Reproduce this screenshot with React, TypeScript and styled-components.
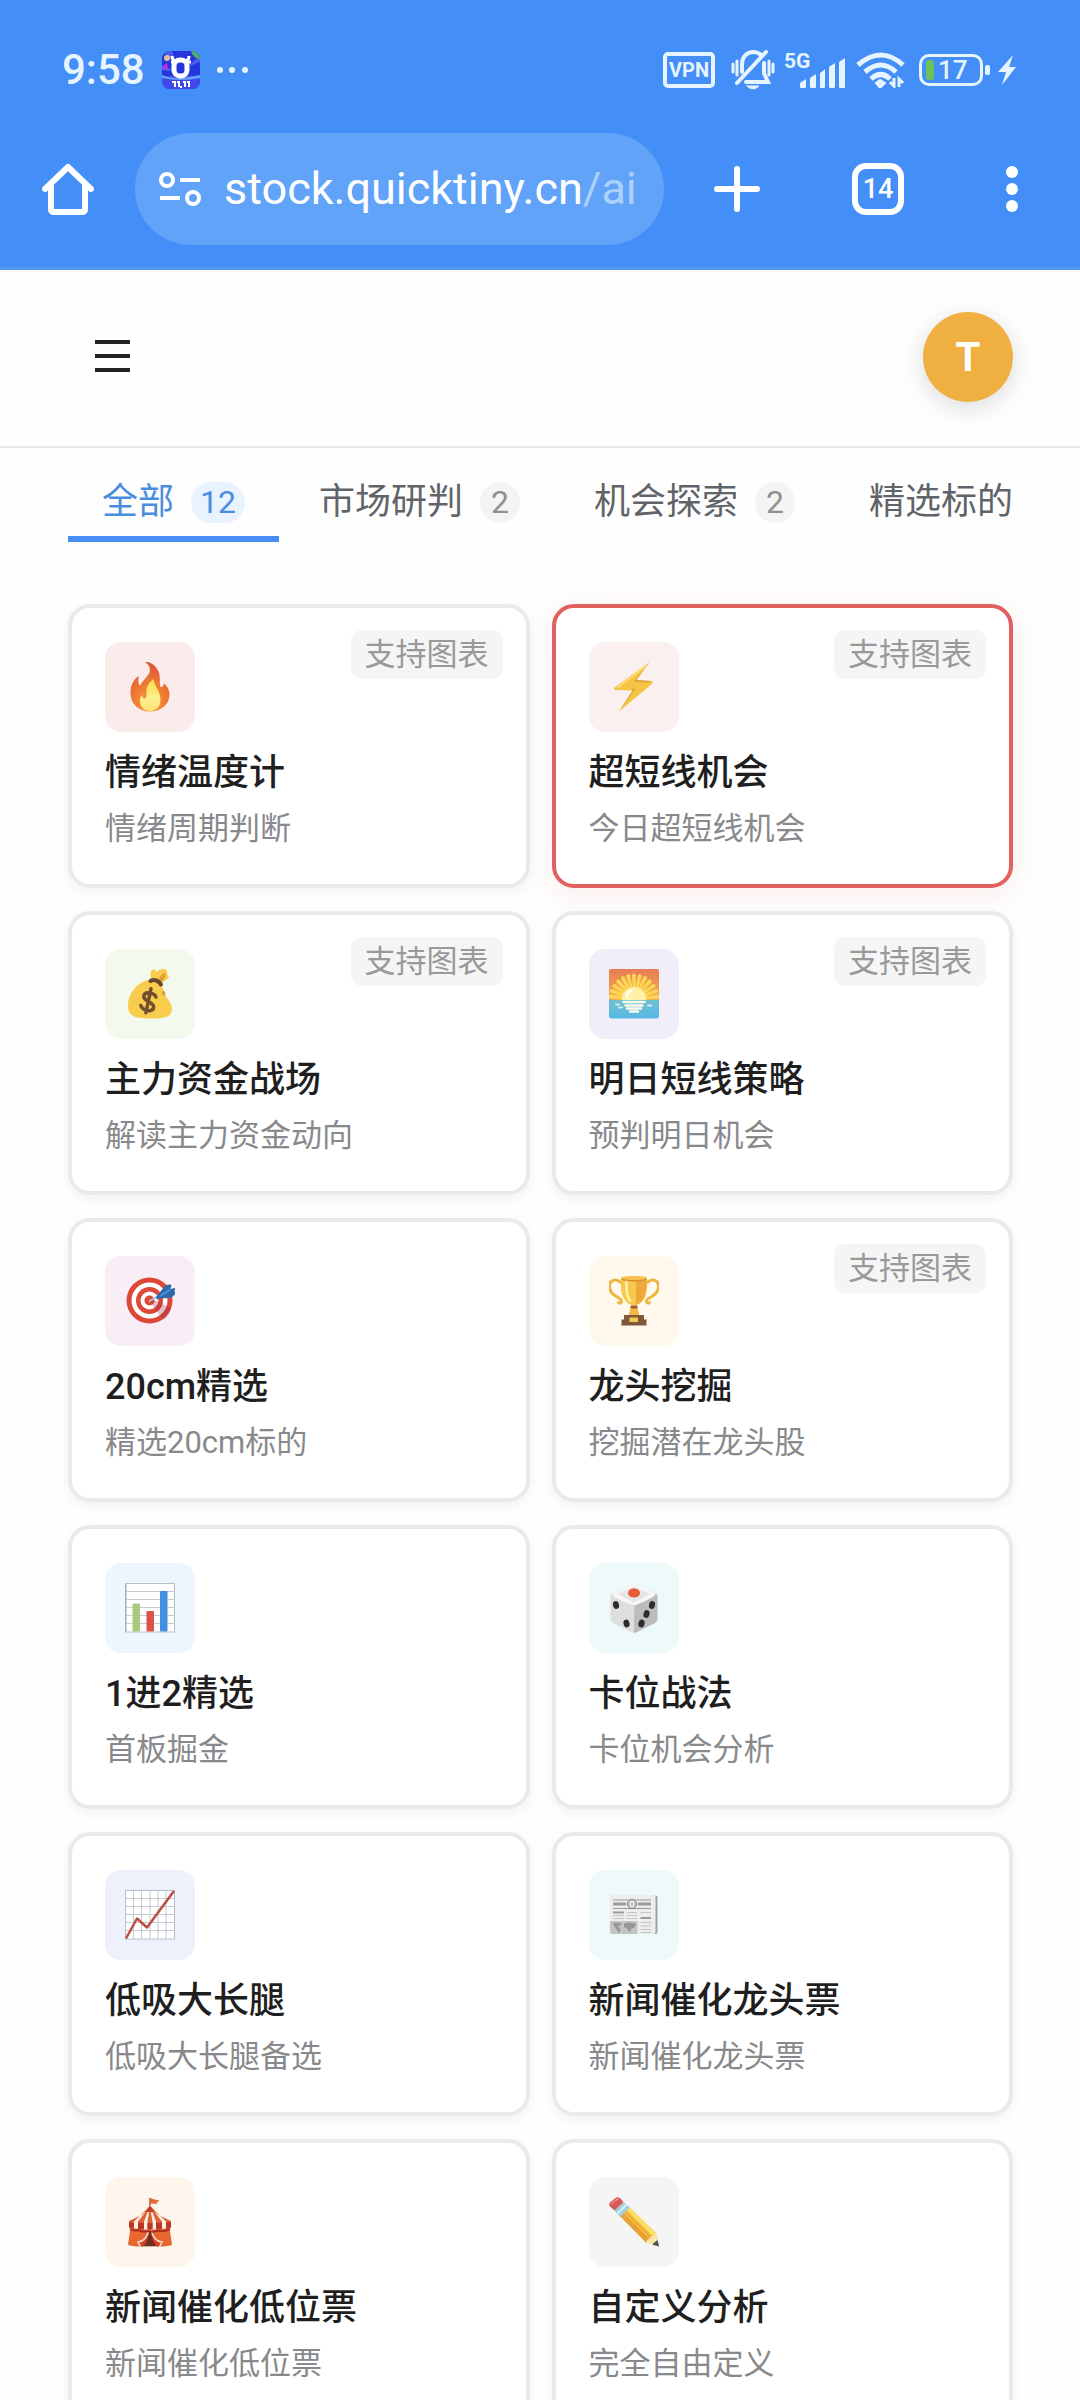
import React, { useState } from 'react';
import styled, { createGlobalStyle } from 'styled-components';

const GlobalStyle = createGlobalStyle`
  * { box-sizing: border-box; }
  body {
    margin: 0;
    background: #fefefe;
    font-family: Roboto, "Noto Sans CJK SC", sans-serif;
  }
  button {
    margin: 0;
    padding: 0;
    border: 0;
    background: none;
    color: inherit;
    font: inherit;
    cursor: pointer;
  }
  svg { display: block; flex: none; }
`;

const Screen = styled.div`
  display: flex;
  flex-direction: column;
  height: 100vh;
  overflow: hidden;
`;

/* ---------- browser chrome ---------- */

const BrowserChrome = styled.div`
  flex: none;
  padding: 48px 0 22px;
  background: #448ef8;
  border-bottom: 3px solid #5298f2;
  color: #fff;
`;

const StatusBar = styled.div`
  display: flex;
  align-items: center;
  justify-content: space-between;
  height: 44px;
  padding: 0 64px 0 62px;
  color: #e6f4ff;
`;

const StatusLeft = styled.div`
  display: flex;
  align-items: center;
  gap: 17px;
`;

const StatusRight = styled.div`
  display: flex;
  align-items: center;
  gap: 8px;
`;

const Clock = styled.time`
  font-size: 42px;
  line-height: 44px;
  font-weight: 500;
`;

const VpnTag = styled.span`
  display: flex;
  align-items: center;
  justify-content: center;
  width: 52px;
  height: 36px;
  border: 4px solid currentColor;
  border-radius: 5px;
  font-size: 20px;
  line-height: 20px;
  font-weight: 700;
`;

const Signal = styled.span`
  display: flex;
  position: relative;
  width: 61px;
  height: 38px;
  justify-content: flex-end;
  align-items: flex-end;
`;

const NetworkType = styled.span`
  position: absolute;
  left: 0;
  top: 0;
  font-size: 21px;
  line-height: 20px;
  font-weight: 700;
`;

const Battery = styled.span`
  display: flex;
  align-items: center;
  gap: 2px;
`;

const BatteryBody = styled.span`
  display: flex;
  align-items: center;
  width: 64px;
  height: 32px;
  padding: 0 4px;
  border: 3px solid currentColor;
  border-radius: 10px;
`;

const BatteryLevel = styled.span`
  width: 8px;
  height: 20px;
  border-radius: 3px;
  background: #6cc25a;
`;

const BatteryText = styled.span`
  flex: 1;
  padding-left: 4px;
  font-size: 26px;
  line-height: 26px;
  font-weight: 500;
`;

const BatteryTip = styled.span`
  width: 5px;
  height: 10px;
  border-radius: 2px;
  background: currentColor;
`;

const Toolbar = styled.div`
  display: flex;
  align-items: center;
  margin-top: 41px;
  padding: 0 52px 0 42px;
`;

const AddressBar = styled.button`
  display: flex;
  flex: 1;
  align-items: center;
  gap: 22px;
  min-width: 0;
  height: 112px;
  margin: 0 50px 0 41px;
  padding: 0 24px;
  border-radius: 56px;
  background: #60a3f8;
  overflow: hidden;
`;

const Address = styled.span`
  font-size: 45px;
  line-height: 60px;
  white-space: nowrap;
`;

const AddressPath = styled.span`
  color: #acd1fd;
`;

const ToolbarActions = styled.div`
  display: flex;
  align-items: center;
  gap: 92px;
`;

const TabSwitcher = styled.button`
  && {
    width: 52px;
    height: 52px;
    border: 6px solid #fff;
    border-radius: 14px;
    font-size: 27px;
    line-height: 40px;
    font-weight: 500;
    text-align: center;
  }
`;

/* ---------- page ---------- */

const SiteHeader = styled.header`
  display: flex;
  flex: none;
  align-items: center;
  justify-content: space-between;
  height: 178px;
  padding: 0 67px 2px 92px;
  border-bottom: 2px solid #e8e8ec;
`;

const Avatar = styled.button`
  && {
    width: 90px;
    height: 90px;
    border-radius: 50%;
    background: #efaf41;
    box-shadow: 0 6px 24px rgba(0, 0, 0, 0.14);
    color: #fff;
    font-size: 40px;
    font-weight: 700;
  }
`;

const Content = styled.main`
  flex: 1;
  min-height: 0;
  padding: 20px 67px 24px 68px;
  overflow-y: auto;
  scrollbar-width: none;
`;

const TabList = styled.div`
  display: flex;
  gap: 6px;
  margin-bottom: 62px;
  overflow-x: auto;
  scrollbar-width: none;
`;

const Tab = styled.button<{ $active: boolean }>`
  && {
    display: flex;
    flex: none;
    align-items: center;
    gap: 17px;
    height: 74px;
    padding: 0 34px;
    border-bottom: 6px solid ${(p) => (p.$active ? '#478ef2' : 'transparent')};
    color: ${(p) => (p.$active ? '#4a8de0' : '#606468')};
    font-size: 36px;
    line-height: 54px;
    white-space: nowrap;
  }
`;

const Count = styled.span<{ $active: boolean }>`
  min-width: 40px;
  padding: 0 9px;
  border-radius: 21px;
  background: ${(p) => (p.$active ? '#e8f3ff' : '#f4f4f4')};
  color: ${(p) => (p.$active ? '#4a8de0' : '#909090')};
  font-size: 32px;
  line-height: 41px;
  text-align: center;
`;

const CardGrid = styled.div`
  display: grid;
  grid-template-columns: repeat(2, minmax(0, 1fr));
  gap: 23px 22px;
`;

const Card = styled.button<{ $hot?: boolean }>`
  && {
    display: flex;
    position: relative;
    flex-direction: column;
    align-items: flex-start;
    padding: 34px 33px 32px;
    border: 4px solid ${(p) => (p.$hot ? '#e06160' : '#e8eaee')};
    border-radius: 22px;
    background: #fff;
    box-shadow: ${(p) =>
      p.$hot ? '0 6px 30px rgba(224, 97, 96, 0.12)' : '0 4px 12px rgba(0, 0, 0, 0.05)'};
    text-align: left;
  }
`;

const IconTile = styled.span<{ $tint: string }>`
  display: flex;
  align-items: center;
  justify-content: center;
  width: 90px;
  height: 90px;
  border-radius: 16px;
  background: ${(p) => p.$tint};
`;

const CardTitle = styled.span`
  margin-top: 14px;
  color: #1f1f1f;
  font-size: 36px;
  line-height: 54px;
  font-weight: 500;
`;

const CardNote = styled.span`
  margin-top: 6px;
  color: #88898c;
  font-size: 31px;
  line-height: 46px;
`;

const ChartBadge = styled.span`
  position: absolute;
  top: 22px;
  right: 23px;
  padding: 0 14px;
  border-radius: 11px;
  background: #f5f5f5;
  color: #999;
  font-size: 31px;
  line-height: 49px;
`;

/* ---------- emoji drawings, 100 x 100 units each ---------- */

const Emoji = ({ children }: { children: React.ReactNode }) => (
  <svg width="50" height="50" viewBox="0 0 100 100" aria-hidden="true">
    {children}
  </svg>
);

const Fire = () => (
  <Emoji>
    <defs>
      <radialGradient id="fireOuter" cx="50%" cy="85%" r="85%">
        <stop offset="0" stopColor="#f6a23a" />
        <stop offset="0.5" stopColor="#ee7a33" />
        <stop offset="1" stopColor="#de4f3b" />
      </radialGradient>
      <linearGradient id="fireInner" x1="0" y1="0" x2="0" y2="1">
        <stop offset="0" stopColor="#fbd84e" />
        <stop offset="0.6" stopColor="#fdf08c" />
        <stop offset="1" stopColor="#fbe077" />
      </linearGradient>
    </defs>
    <path d="M40 0c12-1 22 8 27 19 4 10 2 20 3 28 1 6 6 3 8-4 7 5 11 14 11 22 0 20-17 34-39 34S11 84 11 62c0-15 6-28 17-34-2 8-2 14 2 20 5-12 19-20 20-32 0-7-4-12-10-16Z" fill="url(#fireOuter)" />
    <path d="M58 34c-1 14 13 22 13 42 0 14-9 22-21 22s-20-8-20-20c0-5 1-9 4-12 1 4 2 7 6 7 6-3 1-13 4-22 2-8 8-14 14-17Z" fill="url(#fireInner)" />
  </Emoji>
);

const Bolt = () => (
  <Emoji>
    <path d="M81 0 11 51c-2 2-1 5 2 5l34 1-27 42 66-55c3-3 1-6-2-6l-29-2Z" fill="#f6c544" />
    <path d="M81 0 55 36l29 2-4 3-31-1Z" fill="#e0a83a" />
    <path d="m20 99 27-42-3-3 9-1Z" fill="#dca13a" />
    <path d="M75 7 17 51" stroke="#fde38a" strokeWidth="3" fill="none" />
  </Emoji>
);

const MoneyBag = () => (
  <Emoji>
    <path d="M50 22c13 0 25 8 28 25 4 13 17 19 16 34-1 14-11 18-44 18S6 93 6 73c0-22 20-51 44-51Z" fill="#f8cc4c" />
    <path d="M75 43c6 1 7 7 4 11-4-3-6-6-4-11Z" fill="#d79a35" />
    <path d="M53 22c-3-10-3-20 4-21 4 0 5 4 7 5 3-5 12-8 18-5 5 3 0 7 3 10 5 3 2 8-3 11l-9 6Z" fill="#f8cc4c" />
    <path d="M67 20c4-7 8-11 14-13l-1 10c-2 5-5 8-8 10Z" fill="#df9f38" />
    <path d="M51 24c7-4 17-1 21 7" fill="none" stroke="#6d472c" strokeWidth="8" strokeLinecap="round" />
    <g transform="rotate(12 47 63)" fill="none" stroke="#71502f" strokeWidth="7" strokeLinecap="round">
      <path d="M60 53c-4-7-24-8-24 3 0 12 24 7 24 19 0 10-20 11-26 1M47 39v49" />
    </g>
  </Emoji>
);

const Sunrise = () => (
  <Emoji>
    <defs>
      <linearGradient id="sky" x1="0" y1="0" x2="0" y2="1">
        <stop offset="0" stopColor="#e87b55" />
        <stop offset="1" stopColor="#f6b04c" />
      </linearGradient>
      <linearGradient id="sea" x1="0" y1="0" x2="0" y2="1">
        <stop offset="0" stopColor="#9ccfb0" />
        <stop offset="1" stopColor="#55b8e4" />
      </linearGradient>
      <clipPath id="skyClip"><rect width="100" height="62" rx="4" /></clipPath>
    </defs>
    <rect width="100" height="99" rx="5" fill="url(#sea)" />
    <g clipPath="url(#skyClip)">
      <rect width="100" height="64" fill="url(#sky)" />
      {[-84, -70, -56, -42, -28, -14, 0, 14, 28, 42, 56, 70, 84].map((a) => (
        <path key={a} d="M48 58 46 12Q50 5 54 12L52 58Z" fill="#fcd553" transform={`rotate(${a} 50 60)`} />
      ))}
      <circle cx="50" cy="60" r="25" fill="#fff1a6" stroke="#f8ce66" strokeWidth="2" />
      <path d="M36 56q1-10 8-13" stroke="#fff" strokeWidth="5" strokeLinecap="round" fill="none" />
    </g>
    <path d="M29 66h42M33 73h34M36 79h28M42 85h16" stroke="#fffbe8" strokeWidth="5" strokeLinecap="round" />
    <path d="M14 71h6M20 77h6M78 73h7" stroke="#d4eee3" strokeWidth="4" strokeLinecap="round" />
  </Emoji>
);

const Target = () => (
  <Emoji>
    <circle cx="49" cy="49" r="46" fill="#dd4737" />
    <circle cx="49" cy="49" r="36" fill="#fff" />
    <circle cx="49" cy="49" r="27" fill="#dd4737" />
    <circle cx="49" cy="49" r="18" fill="#fff" />
    <circle cx="49" cy="49" r="10" fill="#dd4737" />
    <path d="m53 53 9-4 30 16c-3 12-9 19-16 23L56 60Z" fill="#9d2c48" opacity=".3" />
    <path d="m49 50 24-14" stroke="#abc3d7" strokeWidth="4" strokeLinecap="round" />
    <path d="m66 37 12-15c6-5 10-6 15-4l-2 8 10-2-2 7 2 4c-5 7-9 9-14 9l-17 1-6 2-2-4Z" fill="#2f69ae" />
    <path d="m70 40 20-12" stroke="#4f96de" strokeWidth="3" />
  </Emoji>
);

const Trophy = () => (
  <Emoji>
    <path d="M24 13C9 2-4 12 3 29c4 12 21 14 22 20 1 5-4 7-6 4M76 13c15-11 28-1 21 16-4 12-21 14-22 20-1 5 4 7 6 4" fill="none" stroke="#efb541" strokeWidth="6" strokeLinecap="round" />
    <path d="M44 60h12l5 20H39Z" fill="#f0b83f" />
    <path d="M24 5h52c2 29-3 49-26 55C27 54 22 34 24 5Z" fill="#f7c84b" />
    <path d="M54 6h21c1 26-3 45-21 52Z" fill="#eea83a" />
    <path d="M35 10c-1 20 1 31 7 39" stroke="#fff1aa" strokeWidth="5" strokeLinecap="round" fill="none" />
    <ellipse cx="50" cy="6" rx="26" ry="5" fill="#d68e2e" />
    <ellipse cx="50" cy="4" rx="26" ry="4" fill="#f5c14a" />
    <rect x="43" y="59" width="14" height="6" rx="2" fill="#a65f30" />
    <path d="M30 78h40v9h5v12H25V87h5Z" fill="#80583c" />
    <rect x="41" y="83" width="17" height="9" fill="#f4c550" />
  </Emoji>
);

const BarChart = () => (
  <Emoji>
    <rect x="1" y="1" width="98" height="97" fill="#fff" stroke="#b7c0c7" strokeWidth="2" />
    <path d="M1 17h98M1 33h98M1 49h98M1 65h98M1 81h98" stroke="#c3cbd1" strokeWidth="2" />
    <path d="M2 98V2" stroke="#9eabb4" strokeWidth="2" />
    <rect x="15" y="41" width="15" height="56" rx="2" fill="#a7cb7b" />
    <rect x="43" y="56" width="15" height="41" rx="2" fill="#dc5348" />
    <rect x="70" y="16" width="15" height="81" rx="2" fill="#428fdf" />
  </Emoji>
);

const Dice = () => (
  <Emoji>
    <path d="M45 2q5-2 10 0l37 17q5 3 5 8v44q0 6-5 9L56 98q-6 3-12 0L8 80q-5-3-5-9V27q0-5 5-8Z" fill="#dedede" />
    <path d="m51 46 43-25q4 3 3 7v43q0 6-5 9L56 98q-3 2-6 1Z" fill="#bcbcbc" />
    <path d="M6 21 45 2q5-2 10 0l39 19q-3 8-38 22-6 3-12 0Q9 30 6 21Z" fill="#f7f7f7" />
    <path d="M17 22 50 7l33 15-33 17Z" fill="#e7e5e5" />
    <ellipse cx="50" cy="20" rx="12" ry="9" fill="#e45b36" />
    <g fill="#2c2c2c">
      <ellipse cx="14" cy="44" rx="6" ry="8" transform="rotate(-15 14 44)" />
      <ellipse cx="35" cy="81" rx="6" ry="8" transform="rotate(-15 35 81)" />
      <ellipse cx="86" cy="44" rx="6" ry="8" transform="rotate(15 86 44)" />
      <ellipse cx="75" cy="62" rx="6" ry="8" transform="rotate(15 75 62)" />
      <ellipse cx="65" cy="81" rx="6" ry="8" transform="rotate(15 65 81)" />
    </g>
  </Emoji>
);

const LineChart = () => (
  <Emoji>
    <rect x="1" y="1" width="98" height="97" fill="#fff" stroke="#b7c0c7" strokeWidth="2" />
    <path d="M1 17h98M1 33h98M1 49h98M1 65h98M1 81h98M17 1v97M33 1v97M50 1v97M66 1v97M82 1v97" stroke="#c3cbd1" strokeWidth="2" />
    <path d="m2 97 22-40 20 18L98 2" fill="none" stroke="#bd4c43" strokeWidth="5" strokeLinejoin="round" />
  </Emoji>
);

const Newspaper = () => (
  <Emoji>
    <path d="M88 11h6q3 0 3 3v70q0 4-4 4H84Z" fill="#a3a3a3" />
    <path d="M5 10h85q3 0 3 3v71q0 4-4 4H7q-5 0-5-5V13q0-3 3-3Z" fill="#ededeb" />
    <path d="M8 20h76M8 37h76" stroke="#999" strokeWidth="2" />
    <path d="M8 28h26M58 28h26" stroke="#9b9b9b" strokeWidth="6" />
    <circle cx="46" cy="28" r="9" fill="#eee" stroke="#777" strokeWidth="2" />
    <path d="M37 28h18M46 19v18M41 21q-3 7 0 14M51 21q3 7 0 14" stroke="#888" strokeWidth="1" fill="none" />
    <path d="M8 45h22M63 56h21" stroke="#9a9a9a" strokeWidth="4" />
    <path d="M8 51h22M8 57h22M35 45h21M35 51h21M35 57h21M63 45h21M63 65h21M63 72h21M63 79h21M63 85h21" stroke="#c5c5c5" strokeWidth="2" />
    <path d="M2 62h55v26H7q-5 0-5-5Z" fill="#c4c4c4" />
    <path d="M9 65l17 1-4 5-4 2 5 6-3 8-6-10-4-5ZM30 67l10-2 14 2-3 8-6 2-4 8-4-7-7-4Z" fill="#969696" />
  </Emoji>
);

const Circus = () => (
  <Emoji>
    <path d="M50 2v18" stroke="#b54a2b" strokeWidth="3" />
    <path d="m51 2 8 3 10 2-6 5 2 2-14-1Z" fill="#e36a3c" />
    <ellipse cx="50" cy="96" rx="44" ry="4" fill="#cbb9ae" />
    <path d="M11 62h78l5 33q-10 5-28 3l-16-4-16 4q-18 2-28-3Z" fill="#e9662f" />
    <path d="M50 62 66 98H34Z" fill="#74301c" />
    <path d="M50 60c-3 17-10 28-22 32l6 8c10-6 12-20 16-40ZM50 60c3 17 10 28 22 32l-6 8c-10-6-12-20-16-40Z" fill="#d54426" />
    <path d="M48 64c-3 16-9 25-22 26l5 10M52 64c3 16 9 25 22 26l-5 10" stroke="#f6ded0" strokeWidth="3" fill="none" />
    <path d="M50 16C42 33 28 39 8 48v13q42 9 84 0V48C72 39 58 33 50 16Z" fill="#f9efe3" />
    <path d="M50 18C42 33 28 39 8 48v13l10 2V49ZM49 20 26 49v15h12V49ZM50 20l-5 29v16h10V49ZM51 20l11 29v15h12V49ZM50 18l32 31v14l10-2V48C72 39 58 33 50 18Z" fill="#de6437" />
    <path d="M8 50v11l10 2V51ZM26 51v14h12V52ZM45 52v13h10V52ZM62 52v13h12V51ZM82 51v12l10-2V50Z" fill="#bd3527" />
    <path d="M50 17 41 29q9 3 18 0Z" fill="#c44129" />
    <path d="M10 64q8 5 16 2 10 5 20 2 10 3 20-1 10 4 24-3" stroke="#ad2d20" strokeWidth="4" fill="none" />
  </Emoji>
);

const Pencil = () => (
  <Emoji>
    <path d="M23 39 41 21l53 51 6 26-26-7Z" fill="#f6bf3d" />
    <path d="m36 26 6-5 52 51-7 5Z" fill="#fae065" />
    <path d="m22 38 7-6 53 53-8 6Z" fill="#e9a038" />
    <path d="m32 29 55 55" stroke="#dc8f2f" strokeWidth="2" />
    <path d="M94 72q-4 0-5 5-6 0-7 6-6 1-8 8l26 8Z" fill="#fbe6a7" />
    <path d="m97 86-11 9 14 4Z" fill="#4f5154" />
    <path d="M10 26 27 9l15 12-20 19Z" fill="#a3cfdd" />
    <path d="m17 33 18-18" stroke="#d9f0f4" strokeWidth="4" />
    <path d="M2 19Q-1 15 2 11L13 2q5-3 10 1l6 7-18 17Z" fill="#dc5758" />
    <path d="M4 13 14 4q4-2 6 1-8 2-14 10Z" fill="#ef8d8a" />
  </Emoji>
);

/* ---------- system icons ---------- */

const AppBadgeIcon = () => (
  <svg width="38" height="38" viewBox="0 0 38 38" aria-hidden="true">
    <defs>
      <clipPath id="appClip"><rect width="38" height="38" rx="8" /></clipPath>
    </defs>
    <g clipPath="url(#appClip)">
      <rect width="38" height="38" fill="#2636dd" />
      <path d="M0 0h10l5 14ZM38 5 23 17l15-6ZM0 14l14 7-14-2Z" fill="#4960ee" />
      <path d="M0 26q19-4 38 0v12H0Z" fill="#3f48ea" />
      <path d="M0 24q9 4 19 3t19-3v3q-19 4-38 0Z" fill="#63a2fb" />
      <circle cx="5" cy="7" r="3" fill="#e9bd9a" />
      <path d="m1 15 4-3 1 5-4 2Z" fill="#c22bd7" />
      <path d="M29 0h9v8q-7-1-9-8Z" fill="#4cae62" />
      <path d="M10 5q0 5 5 5M27 5q0 5-5 5" stroke="#fff" strokeWidth="3" fill="none" />
      <path d="M9 11h4M24 11h5" stroke="#fff" strokeWidth="3" />
      <rect x="12" y="9" width="13" height="16" rx="6" fill="none" stroke="#fff" strokeWidth="5" />
      <path d="M10 31h3v5M15 31h2v5M21 31h2v5M25 31h2v5" stroke="#fff" strokeWidth="2" fill="none" />
      <path d="M18 35h2v2h-2Z" fill="#fff" />
    </g>
  </svg>
);

const MoreDots = () => (
  <svg width="32" height="8" viewBox="0 0 32 8" fill="currentColor" aria-hidden="true">
    <circle cx="3" cy="4" r="3" />
    <circle cx="15" cy="4" r="3" />
    <circle cx="28" cy="4" r="3" />
  </svg>
);

const SilentIcon = () => (
  <svg width="53" height="40" viewBox="0 0 53 40" fill="none" stroke="currentColor" strokeWidth="3" strokeLinecap="round" aria-hidden="true">
    <path d="M10 14v8M14 11v14M46 11v14M50 14v8" />
    <path d="M19 22v-8c0-7 5-12 11-12 3 0 6 1 8 3M41 13v10l4 9H23" strokeWidth="4" />
    <path d="m14 33 29-31" strokeWidth="4" />
    <path d="M24 36h12q-6 6-12 0Z" fill="currentColor" strokeWidth="1" />
  </svg>
);

const SignalBars = () => (
  <svg width="45" height="32" viewBox="0 0 45 32" fill="currentColor" aria-hidden="true">
    <path d="M0 27q0-2 3-3l3-2v8q0 1-1 1H1q-1 0-1-1ZM10 22q0-2 3-3l3-2v13q0 1-1 1h-4q-1 0-1-1ZM20 17q0-2 3-3l2-2v18q0 1-1 1h-3q-1 0-1-1ZM29 11q0-2 3-3l3-2v24q0 1-1 1h-4q-1 0-1-1ZM39 6q0-2 3-3l3-2v29q0 1-1 1h-4q-1 0-1-1Z" />
  </svg>
);

const WifiIcon = () => (
  <svg width="58" height="36" viewBox="0 0 58 36" fill="none" stroke="currentColor" strokeWidth="5" aria-hidden="true">
    <path d="M5 13Q28-7 50 13M12 20q16-14 31 0M18 27q10-9 19 0" />
    <path d="m23 31 4-3 5 3-5 5Z" fill="currentColor" strokeWidth="2" />
    <path d="M41 26v8l-4-4M46 35v-8l4 4" strokeWidth="3" />
  </svg>
);

const ChargeIcon = () => (
  <svg width="18" height="30" viewBox="0 0 18 30" fill="currentColor" aria-hidden="true">
    <path d="M15 0 0 17h8L4 30l14-18h-7Z" />
  </svg>
);

const HomeIcon = () => (
  <svg width="52" height="52" viewBox="0 0 52 52" fill="none" stroke="#fff" strokeWidth="6" strokeLinecap="round" strokeLinejoin="round">
    <path d="M3 26 26 4l23 22M9 22v24q0 3 3 3h28q3 0 3-3V22" />
  </svg>
);

const TuneIcon = () => (
  <svg width="43" height="36" viewBox="0 0 43 36" fill="none" stroke="#fff" strokeWidth="4" aria-hidden="true">
    <circle cx="8" cy="9" r="6" />
    <circle cx="34" cy="27" r="6" />
    <path d="M21 9h20M1 27h20" />
  </svg>
);

const PlusIcon = () => (
  <svg width="46" height="46" viewBox="0 0 46 46" stroke="#fff" strokeWidth="6" strokeLinecap="round">
    <path d="M23 3v40M3 23h40" />
  </svg>
);

const MenuDots = () => (
  <svg width="32" height="46" viewBox="0 0 32 46" fill="#fff">
    <circle cx="16" cy="6" r="6" />
    <circle cx="16" cy="23" r="6" />
    <circle cx="16" cy="40" r="6" />
  </svg>
);

const HamburgerIcon = () => (
  <svg width="42" height="42" viewBox="0 0 42 42" stroke="#222" strokeWidth="4">
    <path d="M3 6h35M3 20h35M3 34h35" />
  </svg>
);

/* ---------- data ---------- */

const tabs: { label: string; count?: number }[] = [
  { label: '全部', count: 12 },
  { label: '市场研判', count: 2 },
  { label: '机会探索', count: 2 },
  { label: '精选标的' },
];

const cards = [
  { title: '情绪温度计', note: '情绪周期判断', tint: '#fbecec', Icon: Fire, chart: true },
  { title: '超短线机会', note: '今日超短线机会', tint: '#fbf0f0', Icon: Bolt, chart: true, hot: true },
  { title: '主力资金战场', note: '解读主力资金动向', tint: '#f3f9ed', Icon: MoneyBag, chart: true },
  { title: '明日短线策略', note: '预判明日机会', tint: '#f1eefa', Icon: Sunrise, chart: true },
  { title: '20cm精选', note: '精选20cm标的', tint: '#f9edf6', Icon: Target },
  { title: '龙头挖掘', note: '挖掘潜在龙头股', tint: '#fff8ec', Icon: Trophy, chart: true },
  { title: '1进2精选', note: '首板掘金', tint: '#edf6fe', Icon: BarChart },
  { title: '卡位战法', note: '卡位机会分析', tint: '#eefafa', Icon: Dice },
  { title: '低吸大长腿', note: '低吸大长腿备选', tint: '#eef0fc', Icon: LineChart },
  { title: '新闻催化龙头票', note: '新闻催化龙头票', tint: '#eefafa', Icon: Newspaper },
  { title: '新闻催化低位票', note: '新闻催化低位票', tint: '#fef6ec', Icon: Circus },
  { title: '自定义分析', note: '完全自由定义', tint: '#f5f5f5', Icon: Pencil },
];

export default function App() {
  const [active, setActive] = useState(0);

  return (
    <Screen>
      <GlobalStyle />
      <BrowserChrome>
        <StatusBar>
          <StatusLeft>
            <Clock>9:58</Clock>
            <AppBadgeIcon />
            <MoreDots />
          </StatusLeft>
          <StatusRight>
            <VpnTag>VPN</VpnTag>
            <SilentIcon />
            <Signal>
              <NetworkType>5G</NetworkType>
              <SignalBars />
            </Signal>
            <WifiIcon />
            <Battery>
              <BatteryBody>
                <BatteryLevel />
                <BatteryText>17</BatteryText>
              </BatteryBody>
              <BatteryTip />
            </Battery>
            <ChargeIcon />
          </StatusRight>
        </StatusBar>
        <Toolbar>
          <button type="button" aria-label="Home"><HomeIcon /></button>
          <AddressBar type="button">
            <TuneIcon />
            <Address>
              stock.quicktiny.cn<AddressPath>/ai</AddressPath>
            </Address>
          </AddressBar>
          <ToolbarActions>
            <button type="button" aria-label="New tab"><PlusIcon /></button>
            <TabSwitcher type="button">14</TabSwitcher>
            <button type="button" aria-label="More"><MenuDots /></button>
          </ToolbarActions>
        </Toolbar>
      </BrowserChrome>

      <SiteHeader>
        <button type="button" aria-label="Menu"><HamburgerIcon /></button>
        <Avatar type="button">T</Avatar>
      </SiteHeader>

      <Content>
        <TabList role="tablist">
          {tabs.map((tab, i) => (
            <Tab
              key={tab.label}
              type="button"
              role="tab"
              aria-selected={i === active}
              $active={i === active}
              onClick={() => setActive(i)}
            >
              <span>{tab.label}</span>
              {tab.count !== undefined && <Count $active={i === active}>{tab.count}</Count>}
            </Tab>
          ))}
        </TabList>
        <CardGrid>
          {cards.map(({ title, note, tint, Icon, chart, hot }) => (
            <Card key={title} type="button" $hot={hot}>
              <IconTile $tint={tint}><Icon /></IconTile>
              <CardTitle>{title}</CardTitle>
              <CardNote>{note}</CardNote>
              {chart && <ChartBadge>支持图表</ChartBadge>}
            </Card>
          ))}
        </CardGrid>
      </Content>
    </Screen>
  );
}
